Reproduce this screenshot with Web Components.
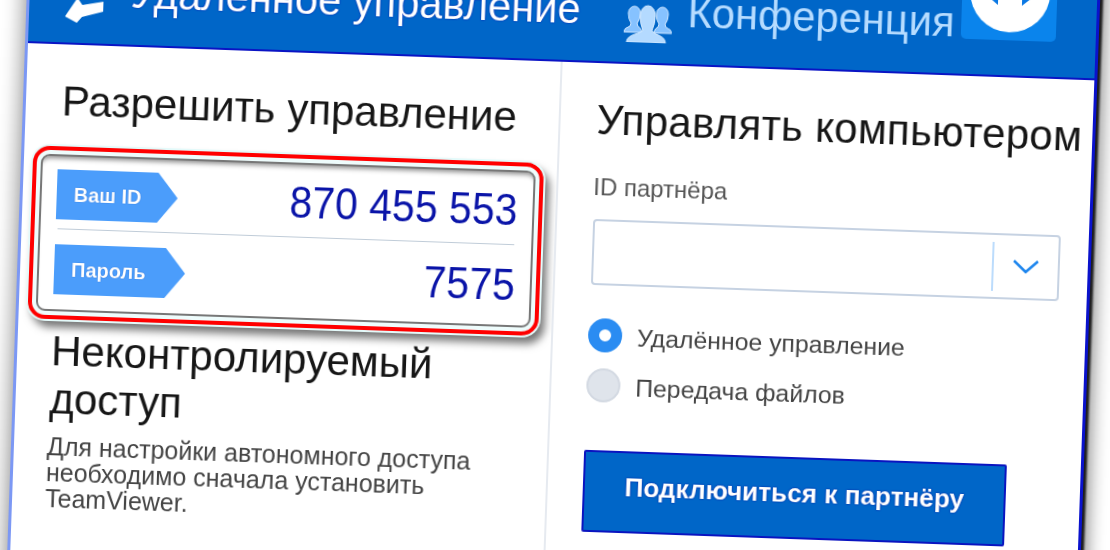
<!DOCTYPE html>
<html lang="ru">
<head>
<meta charset="utf-8">
<title>TeamViewer</title>
<style>
  html, body { margin: 0; height: 550px; overflow: hidden; background: #fff; }
  body { font-family: "Liberation Sans", Arial, sans-serif; color: #222; }
</style>
</head>
<body>
<tv-window>
  <tv-tab slot="tabs" kind="remote">Удаленное управление</tv-tab>
  <tv-tab slot="tabs" kind="meeting">Конференция</tv-tab>
  <tv-logo slot="tabs"></tv-logo>

  <tv-heading slot="left" top="33" indent="36">Разрешить управление</tv-heading>
  <id-panel slot="left">
    <id-row slot="id" label="Ваш ID" value="870 455 553" badge="121" height="68"></id-row>
    <id-row slot="password" label="Пароль" value="7575" badge="131" height="80"></id-row>
  </id-panel>
  <tv-heading slot="left" top="8" indent="34">Неконтролируемый<br>доступ</tv-heading>
  <tv-note slot="left">Для настройки автономного доступа<br>необходимо сначала установить<br>TeamViewer.</tv-note>

  <tv-heading slot="right" top="33" indent="1" spacing="0.3">Управлять компьютером</tv-heading>
  <partner-field slot="right" label="ID партнёра"></partner-field>
  <radio-item slot="right" checked>Удалённое управление</radio-item>
  <radio-item slot="right">Передача файлов</radio-item>
  <connect-button slot="right">Подключиться к партнёру</connect-button>
</tv-window>

<script>
class tvWindow extends HTMLElement {
  constructor() {
    super();
    this.attachShadow({ mode: "open" });
    this.shadowRoot.innerHTML = `
      <style>
        :host {
          display: block;
          box-sizing: border-box;
          width: 1073px;
          height: 720px;
          margin: -57px 0 0 25px;
          background: #fff;
          border-left: 3px solid #7c98f4;
          border-right: 3px solid #0a12cc;
          transform-origin: 0 100px;
          transform: rotate(2deg);
          filter: blur(0.55px);
          box-shadow: 3px 0 2px #1c1c1c, 9px 0 14px rgba(0,0,0,.32), -6px 0 16px rgba(0,0,0,.3);
        }
        header {
          display: flex;
          align-items: flex-end;
          box-sizing: border-box;
          height: 100px;
          padding-left: 36px;
          background: #0066c8;
          border-bottom: 2px solid #0a14c4;
        }
        main { display: grid; grid-template-columns: 533px 1fr; height: 620px; }
        .left { display: flex; flex-direction: column; align-items: flex-start; }
        .right {
          display: flex;
          flex-direction: column;
          align-items: flex-start;
          padding-left: 35px;
          border-left: 2px solid #e6eaf0;
        }
      </style>
      <header><slot name="tabs"></slot></header>
      <main>
        <div class="left"><slot name="left"></slot></div>
        <div class="right"><slot name="right"></slot></div>
      </main>
    `;
  }
}

class tvTab extends HTMLElement {
  constructor() {
    super();
    this.attachShadow({ mode: "open" });
  }
  getIcon(kind) {
    if (kind === "remote") {
      return `<svg class="remote" width="42" height="30" viewBox="0 0 42 30">
        <path d="M0 24 L12 30 L17 24 L38 18 L38 8 L17 12 L12 5 Z" fill="#fff"/>
      </svg>`;
    }
    return `<svg class="meeting" width="48" height="50" viewBox="0 0 48 50">
      <g fill="#86c2ff" stroke="#cfe6ff" stroke-width="1">
        <path d="M0 40 Q0 36 6 34 L7 31 Q4 27 4 21 A6 7 0 0 1 16 21 Q16 27 13 31 L14 34 Q17 35 18 40Z"/>
        <path d="M48 40 Q48 36 42 34 L41 31 Q44 27 44 21 A6 7 0 0 0 32 21 Q32 27 35 31 L34 34 Q31 35 30 40Z"/>
      </g>
      <path d="M3 50 Q3 44 14 41 L19 38 Q16 31 16 23 A7.5 10 0 0 1 31 23 Q31 31 28 38 L32 41 Q42 44 42 50Z" fill="#b4daff" stroke="#d8ecff" stroke-width="1"/>
    </svg>`;
  }
  connectedCallback() {
    const kind = this.getAttribute("kind");
    this.shadowRoot.innerHTML = `
      <style>
        :host {
          display: flex;
          align-items: flex-end;
          font-size: 41.7px;
          line-height: 48px;
          padding-bottom: 27px;
        }
        :host([kind="remote"]) { color: #fff; gap: 23px; text-shadow: 0 0 2px #0a14b0; }
        :host([kind="meeting"]) { color: #b6dcff; gap: 15px; margin-left: 44px; }
        svg { flex: none; margin-bottom: -7px; }
        span { white-space: nowrap; }
      </style>
      ${this.getIcon(kind)}
      <span><slot></slot></span>
    `;
  }
}

class tvLogo extends HTMLElement {
  constructor() {
    super();
    this.attachShadow({ mode: "open" });
    this.shadowRoot.innerHTML = `
      <style>
        :host {
          display: block;
          flex: none;
          width: 95px;
          height: 65px;
          margin: 0 0 35px 7px;
          background: #0a84ec;
          border-radius: 0 0 5px 5px;
        }
        svg { display: block; }
      </style>
      <svg width="95" height="65" viewBox="0 0 95 65">
        <circle cx="48" cy="17" r="40" fill="#fff"/>
        <path transform="translate(48 17)" d="M-28 0 L-12 13 L-12 5 L12 5 L12 13 L28 0 L12 -13 L12 -5 L-12 -5 L-12 -13 Z" fill="#0a78e4"/>
      </svg>
    `;
  }
}

class tvHeading extends HTMLElement {
  constructor() {
    super();
    this.attachShadow({ mode: "open" });
  }
  connectedCallback() {
    this.shadowRoot.innerHTML = `
      <style>
        :host {
          display: block;
          margin-top: ${this.getAttribute("top")}px;
          margin-left: ${this.getAttribute("indent")}px;
          font-size: 42px;
          line-height: 48px;
          letter-spacing: ${this.getAttribute("spacing") || 0}px;
          color: #161616;
          white-space: nowrap;
        }
      </style>
      <slot></slot>
    `;
  }
}

class tvNote extends HTMLElement {
  constructor() {
    super();
    this.attachShadow({ mode: "open" });
    this.shadowRoot.innerHTML = `
      <style>
        :host {
          display: block;
          margin: 10px 0 0 33px;
          font-size: 25px;
          line-height: 26px;
          color: #444;
          white-space: nowrap;
        }
      </style>
      <slot></slot>
    `;
  }
}

class idPanel extends HTMLElement {
  constructor() {
    super();
    this.attachShadow({ mode: "open" });
    this.shadowRoot.innerHTML = `
      <style>
        :host {
          display: block;
          box-sizing: border-box;
          width: 511px;
          height: 173px;
          margin: 21px 0 0 9px;
          padding: 4px;
          border: 4px solid #f00;
          border-radius: 17px;
          box-shadow: 0 0 0 2px #e4fafa, 5px 7px 8px 1px rgba(0,0,0,.55);
          background: #eefcfc;
        }
        .inner {
          box-sizing: border-box;
          height: 100%;
          padding-top: 4px;
          background: #fff;
          border: 2px solid #777;
          border-radius: 9px;
          box-shadow: inset 0 6px 5px -4px rgba(0,0,0,.45);
        }
        hr { height: 1px; margin: 0 17px; border: 0; background: #c0ccd8; }
      </style>
      <div class="inner">
        <slot name="id"></slot>
        <hr>
        <slot name="password"></slot>
      </div>
    `;
  }
}

class idRow extends HTMLElement {
  constructor() {
    super();
    this.attachShadow({ mode: "open" });
  }
  connectedCallback() {
    this.shadowRoot.innerHTML = `
      <style>
        :host {
          display: flex;
          align-items: center;
          justify-content: space-between;
          height: ${this.getAttribute("height")}px;
          padding: 0 15px 0 15px;
        }
        .badge {
          display: flex;
          align-items: center;
          box-sizing: border-box;
          width: ${this.getAttribute("badge")}px;
          height: 50px;
          padding-left: 17px;
          background: #4b9dfb;
          clip-path: polygon(0 0, calc(100% - 20px) 0, 100% 50%, calc(100% - 20px) 100%, 0 100%);
          font-size: 20px;
          font-weight: bold;
          color: #fff;
          text-shadow: 0 0 1px #0a50c0;
        }
        .value {
          font-size: 41px;
          line-height: 48px;
          color: #0a14a8;
          transform: scaleY(1.1);
        }
      </style>
      <div class="badge">${this.getAttribute("label")}</div>
      <div class="value">${this.getAttribute("value")}</div>
    `;
  }
}

class partnerField extends HTMLElement {
  constructor() {
    super();
    this.attachShadow({ mode: "open" });
  }
  connectedCallback() {
    this.shadowRoot.innerHTML = `
      <style>
        :host { display: block; margin-top: 30px; }
        label {
          display: block;
          font-size: 24px;
          line-height: 26px;
          color: #555;
        }
        .box {
          display: flex;
          align-items: center;
          justify-content: flex-end;
          box-sizing: border-box;
          width: 468px;
          height: 66px;
          margin: 19px 0 0 1px;
          border: 2px solid #c6d2e2;
          border-radius: 4px;
          background: #fff;
        }
        .split { width: 2px; height: 49px; background: #bcdcfc; }
        .arrow { display: flex; justify-content: center; width: 64px; }
      </style>
      <label>${this.getAttribute("label")}</label>
      <div class="box">
        <div class="split"></div>
        <div class="arrow">
          <svg width="28" height="16" viewBox="0 0 28 16"><path d="M2 2 L14 13 L26 2" fill="none" stroke="#1e86ee" stroke-width="2.6"/></svg>
        </div>
      </div>
    `;
  }
}

class radioItem extends HTMLElement {
  constructor() {
    super();
    this.attachShadow({ mode: "open" });
    this.shadowRoot.innerHTML = `
      <style>
        :host {
          display: flex;
          align-items: center;
          gap: 15px;
          height: 34px;
          margin-top: 33px;
          font-size: 24.8px;
          color: #444;
        }
        :host(:not([checked])) { margin-top: 16px; }
        i {
          flex: none;
          box-sizing: border-box;
          width: 34px;
          height: 34px;
          border-radius: 50%;
          background: #dfe4eb;
          border: 2px solid #d3d9e2;
        }
        :host([checked]) i { background: #fff; border: 11px solid #2a8cf2; }
        span { padding-top: 3px; white-space: nowrap; }
      </style>
      <i></i><span><slot></slot></span>
    `;
  }
}

class connectButton extends HTMLElement {
  constructor() {
    super();
    this.attachShadow({ mode: "open" });
    this.shadowRoot.innerHTML = `
      <style>
        :host {
          display: flex;
          align-items: center;
          justify-content: center;
          box-sizing: border-box;
          width: 423px;
          height: 82px;
          margin-top: 48px;
          padding-bottom: 10px;
          background: #0066c8;
          border: 2px solid #0a14c0;
          border-radius: 2px;
          font-size: 26.2px;
          font-weight: bold;
          color: #fff;
          white-space: nowrap;
          text-shadow: 0 0 2px #0a14a0;
        }
      </style>
      <slot></slot>
    `;
  }
}

customElements.define("tv-window", tvWindow);
customElements.define("tv-tab", tvTab);
customElements.define("tv-logo", tvLogo);
customElements.define("tv-heading", tvHeading);
customElements.define("tv-note", tvNote);
customElements.define("id-panel", idPanel);
customElements.define("id-row", idRow);
customElements.define("partner-field", partnerField);
customElements.define("radio-item", radioItem);
customElements.define("connect-button", connectButton);
</script>
</body>
</html>
